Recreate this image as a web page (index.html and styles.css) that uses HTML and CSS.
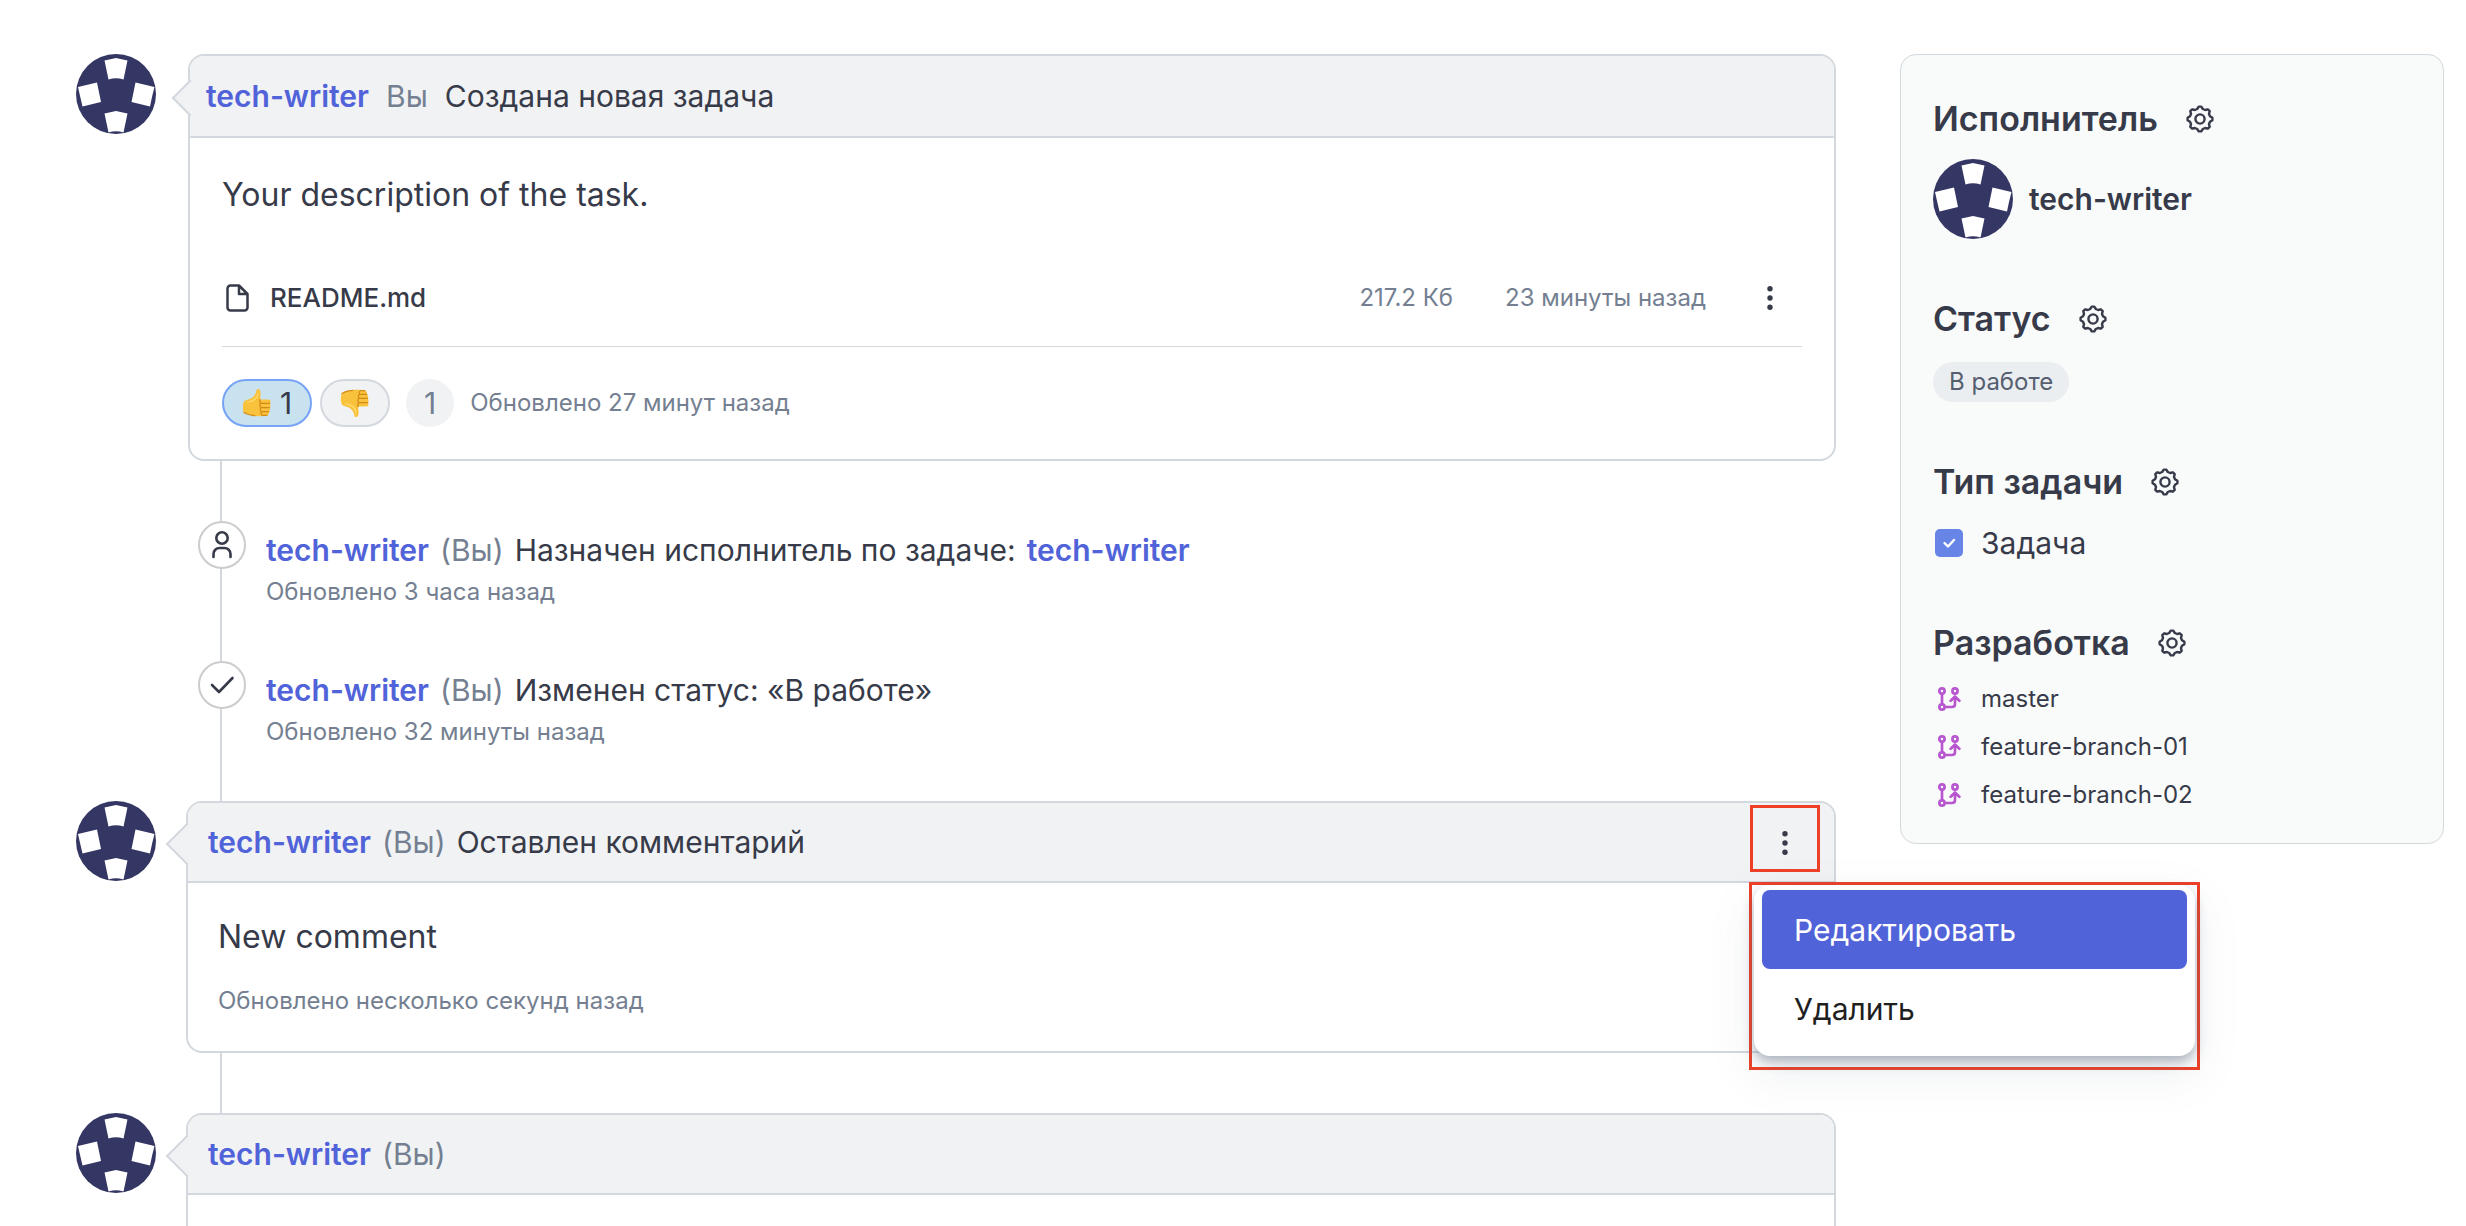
FILE: index.html
```html
<!DOCTYPE html>
<html lang="ru">
<head>
<meta charset="utf-8">
<title>Задача</title>
<meta name="viewport" content="width=device-width, initial-scale=1">
<link rel="stylesheet" href="styles.css">
</head>
<body>
<svg class="sprite" aria-hidden="true">
  <symbol id="avatar" viewBox="0 0 80 80">
    <circle cx="40" cy="40" r="40" fill="#343663"/>
    <g fill="#fff">
      <path d="M28.5 6.500 40 4 51.500 6.500 47.500 25.500Q40 23 32.500 25.500Z"/>
      <path d="M28.5 59.500 40 57 51.500 59.500 47.500 78.500Q40 76 32.500 78.500Z"/>
      <path d="M2 33 21 28.500 25 48 6.500 52.500Q4 42 2 33Z"/>
      <path d="M59.500 28.500 78.500 33Q76 42 74 52.500L55.500 48Z"/>
    </g>
  </symbol>
  <symbol id="gear" viewBox="0 0 28 28">
    <g fill="none" stroke="currentColor" stroke-width="2.400" stroke-linejoin="round">
      <circle cx="14" cy="14" r="4.600"/>
      <path d="M11.200 4 12.700 1.600 15.300 1.600 16.800 4 19.100 5 21.800 4.300 23.700 6.200 23 8.900 24 11.200 26.400 12.700 26.400 15.300 24 16.800 23 19.100 23.700 21.800 21.800 23.700 19.100 23 16.800 24 15.300 26.400 12.700 26.400 11.200 24 8.900 23 6.200 23.700 4.300 21.800 5 19.100 4 16.800 1.600 15.300 1.600 12.700 4 11.200 5 8.900 4.300 6.200 6.200 4.300 8.900 5Z"/>
    </g>
  </symbol>
  <symbol id="dots" viewBox="0 0 24 24">
    <g fill="currentColor"><circle cx="12" cy="2.700" r="2.700"/><circle cx="12" cy="12" r="2.700"/><circle cx="12" cy="21.300" r="2.700"/></g>
  </symbol>
  <symbol id="branch" viewBox="0 0 24 24">
    <g fill="none" stroke="currentColor" stroke-width="2.700" stroke-linecap="round" stroke-linejoin="round">
      <circle cx="5" cy="4" r="2.600"/><circle cx="18" cy="4" r="2.600"/><circle cx="5" cy="20" r="2.600"/>
      <path d="M5 7v10M8 20h7q3 0 3-3v-7M13.700 13.700l4.300-4.200 4.300 4.200"/>
    </g>
  </symbol>
  <symbol id="thumb" viewBox="0 0 32 32">
    <path fill="#f9c23c" d="M17.500 1c1.900.400 2.500 2.700 2.300 5.300-.100 2.200-.500 4.300-.300 6h8.800c2.300 0 2.900 3.200 1.200 4.200 1.500 1.100 1.300 3.600-.200 4.400 1.100 1.200.900 3.500-.700 4.300.800 1.300 0 3.700-2 4-3.800.900-9.500 1.300-13.600.400-4.200-1-8.400-1.600-11-3.300-1.500-3.100-1.400-9.300.300-12.300 2.400-1.600 6-1.500 8.500-3.500C13.500 8.400 15 5.500 15.300 2.700c.200-1.200 1-1.900 2.200-1.700z"/>
    <path fill="#ffdd70" d="M16.500 2.500c1 2.500-.500 7-4 9.500-2.500 1.800-5.500 2-8 3.300 3 .7 7-.5 10-3 2.800-2.400 4-7.300 2-9.800z"/>
    <path fill="none" stroke="#d48a16" stroke-width="1.300" stroke-linecap="round" d="M29.500 16.500h-9.300q-2.500 1.800 0 4.400h9.100M28.600 25.200h-8q-1.800-1.900-.4-4.300M26.600 29.200h-5q-2-1.700-1-4M19.500 12.300q-1.500 2 .700 4.200M2 26c3 2.500 8 2.800 12 3.600"/>
  </symbol>
</svg>

<div class="page">
  <main class="feed">
    <article class="entry entry-task">
      <svg class="avatar"><use href="#avatar"/></svg>
      <section class="card">
        <header class="card-head"><a class="user" href="#">tech-writer</a><span class="you">Вы</span><span>Создана новая задача</span></header>
        <div class="card-body task-body">
          <p class="text">Your description of the task.</p>
          <div class="file">
            <svg class="file-icon" viewBox="0 0 32 32"><path d="M17 3.500H8.500a3 3 0 0 0-3 3v19a3 3 0 0 0 3 3h14a3 3 0 0 0 3-3V12zM17 3.500V12h8.500" fill="none" stroke="currentColor" stroke-width="2.500" stroke-linejoin="round"/></svg>
            <a class="file-name" href="#">README.md</a>
            <span class="file-size">217.2 Кб</span>
            <span class="file-time">23 минуты назад</span>
            <button class="more" aria-label="Действия с файлом"><svg class="dots"><use href="#dots"/></svg></button>
          </div>
          <div class="reactions">
            <button class="reaction active" aria-label="Нравится, 1"><svg class="emoji"><use href="#thumb"/></svg>1</button>
            <button class="reaction" aria-label="Не нравится"><svg class="emoji down"><use href="#thumb"/></svg></button>
            <span class="count">1</span>
            <span class="meta">Обновлено 27 минут назад</span>
          </div>
        </div>
      </section>
    </article>

    <article class="event">
      <span class="event-icon"><svg viewBox="0 0 32 32"><g fill="none" stroke="currentColor" stroke-width="2.600" stroke-linecap="round"><circle cx="16" cy="9" r="5.700"/><path d="M7.500 28v-3a6 6 0 0 1 6-6h5a6 6 0 0 1 6 6v3"/></g></svg></span>
      <div class="event-text">
        <p class="line"><a class="user" href="#">tech-writer</a><span class="you">(Вы)</span><span>Назначен исполнитель по задаче:</span><a class="user" href="#">tech-writer</a></p>
        <p class="meta">Обновлено 3 часа назад</p>
      </div>
    </article>

    <article class="event">
      <span class="event-icon"><svg viewBox="0 0 32 32"><path d="M6 16l7 7L26.500 9" fill="none" stroke="currentColor" stroke-width="2.600" stroke-linecap="round" stroke-linejoin="round"/></svg></span>
      <div class="event-text">
        <p class="line"><a class="user" href="#">tech-writer</a><span class="you">(Вы)</span><span>Изменен статус: «В работе»</span></p>
        <p class="meta">Обновлено 32 минуты назад</p>
      </div>
    </article>

    <article class="entry entry-comment">
      <svg class="avatar"><use href="#avatar"/></svg>
      <section class="card">
        <header class="card-head"><a class="user" href="#">tech-writer</a><span class="you">(Вы)</span><span>Оставлен комментарий</span>
          <div class="actions">
            <button class="more marked" aria-label="Действия с комментарием"><svg class="dots"><use href="#dots"/></svg></button>
            <div class="menu-frame">
              <div class="menu" role="menu">
                <button class="menu-item selected" role="menuitem">Редактировать</button>
                <button class="menu-item" role="menuitem">Удалить</button>
              </div>
            </div>
          </div>
        </header>
        <div class="card-body comment-body">
          <p class="text">New comment</p>
          <p class="meta">Обновлено несколько секунд назад</p>
        </div>
      </section>
    </article>

    <article class="entry entry-comment entry-last">
      <svg class="avatar"><use href="#avatar"/></svg>
      <section class="card">
        <header class="card-head"><a class="user" href="#">tech-writer</a><span class="you">(Вы)</span></header>
      </section>
    </article>
  </main>

  <aside class="sidebar">
    <section class="panel">
      <h2>Исполнитель <button class="gear" aria-label="Изменить исполнителя"><svg><use href="#gear"/></svg></button></h2>
      <div class="assignee"><svg class="avatar"><use href="#avatar"/></svg><span>tech-writer</span></div>
    </section>
    <section class="panel">
      <h2>Статус <button class="gear" aria-label="Изменить статус"><svg><use href="#gear"/></svg></button></h2>
      <span class="badge">В работе</span>
    </section>
    <section class="panel">
      <h2>Тип задачи <button class="gear" aria-label="Изменить тип задачи"><svg><use href="#gear"/></svg></button></h2>
      <div class="type">
        <svg viewBox="0 0 28 28"><rect width="28" height="28" rx="5" fill="#6685e6"/><path d="M9.500 14l3.500 3.500 6-6.500" fill="none" stroke="#fff" stroke-width="2.400" stroke-linecap="round" stroke-linejoin="round"/></svg>
        <span>Задача</span>
      </div>
    </section>
    <section class="panel">
      <h2>Разработка <button class="gear" aria-label="Изменить ветки"><svg><use href="#gear"/></svg></button></h2>
      <ul class="branches">
        <li><svg><use href="#branch"/></svg><a href="#">master</a></li>
        <li><svg><use href="#branch"/></svg><a href="#">feature-branch-01</a></li>
        <li><svg><use href="#branch"/></svg><a href="#">feature-branch-02</a></li>
      </ul>
    </section>
  </aside>
</div>
</body>
</html>
```
FILE: styles.css
```css
:root {
  --ink: #373b49;
  --muted: #748091;
  --accent: #5163d9;
  --line: #d3d8df;
  --head: #f1f2f4;
  --mark: #ee4027;
}

* { box-sizing: border-box; }

body {
  margin: 0;
  background: #fff;
  color: var(--ink);
  font-family: Inter, "Liberation Sans", sans-serif;
  font-size: 30px;
  line-height: 40px;
}

p, h2, ul { margin: 0; padding: 0; }
a { color: inherit; text-decoration: none; }
svg { display: block; flex: none; }

button {
  padding: 0;
  border: 0;
  background: none;
  color: inherit;
  font: inherit;
  cursor: pointer;
}

.sprite { position: absolute; width: 0; height: 0; }

.page {
  display: flex;
  align-items: flex-start;
  gap: 64px;
  min-height: 100vh;
  padding: 54px 22px 0 76px;
}

/* Feed: the vertical thread runs behind the cards and icons */
.feed {
  display: flex;
  flex: 1;
  flex-direction: column;
  align-self: stretch;
  min-width: 0;
  background: linear-gradient(var(--line), var(--line)) 144px 0 / 2px 100% no-repeat;
}

.entry { display: flex; }
.entry-task { gap: 32px; margin-bottom: 60px; }
.entry-comment { gap: 30px; margin-bottom: 60px; }
.entry-last { flex: 1; margin-bottom: 0; }

.avatar { width: 80px; height: 80px; }

.card {
  flex: 1;
  min-width: 0;
  border: 2px solid var(--line);
  border-radius: 16px;
  background: #fff;
}

.entry-last .card { border-bottom: 0; border-radius: 16px 16px 0 0; }

.card-head {
  position: relative;
  display: flex;
  align-items: center;
  gap: 11px;
  height: 80px;
  padding: 0 14px 0 20px;
  border-bottom: 2px solid var(--line);
  border-radius: 14px 14px 0 0;
  background: var(--head);
}

.entry-task .card-head { gap: 17px; height: 82px; padding-left: 16px; }

.card-head::before {
  position: absolute;
  top: 26px;
  left: -16px;
  width: 28px;
  height: 28px;
  border: solid var(--line);
  border-width: 0 0 2px 2px;
  background: var(--head);
  content: "";
  transform: rotate(45deg);
}

.entry-task .card-head::before {
  top: 29px;
  left: -13px;
  width: 24px;
  height: 24px;
}

.user { color: var(--accent); font-weight: 600; }
.you { color: var(--muted); }
.text { font-size: 32px; }
.meta { color: var(--muted); font-size: 24px; line-height: 32px; }

.task-body { padding: 37px 32px 32px; }
.comment-body { padding: 34px 30px; }
.comment-body .meta { margin-top: 28px; }

.file {
  display: flex;
  align-items: center;
  height: 98px;
  margin-top: 34px;
  border-bottom: 1px solid var(--line);
  color: var(--muted);
  font-size: 24px;
}

.file-icon { width: 32px; height: 32px; color: var(--ink); }
.file-name { flex: 1; margin-left: 16px; color: var(--ink); font-size: 26px; font-weight: 500; }
.file-size { margin-right: 52px; }
.file-time { margin-right: 32px; }

.more {
  display: flex;
  align-items: center;
  justify-content: center;
  width: 64px;
  height: 64px;
  color: var(--ink);
}

.dots { width: 24px; height: 24px; }

.reactions { display: flex; align-items: center; gap: 8px; margin-top: 32px; }

.reaction {
  display: flex;
  align-items: center;
  gap: 8px;
  height: 48px;
  padding: 0 18px;
  border: 2px solid var(--line);
  border-radius: 24px;
  background: var(--head);
}

.reaction.active { border-color: #76a3f5; background: #c8e2ef; }
.emoji { width: 30px; height: 32px; }
.emoji.down { transform: scaleY(-1); }

.count {
  width: 48px;
  margin: 0 8px;
  border-radius: 24px;
  background: var(--head);
  color: var(--muted);
  line-height: 48px;
  text-align: center;
}

.event { display: flex; gap: 20px; margin-left: 122px; height: 140px; }

.event-icon {
  display: grid;
  place-items: center;
  flex: none;
  width: 48px;
  height: 48px;
  border: 2px solid #ccc;
  border-radius: 50%;
  background: #fff;
}

.event-icon svg { width: 32px; height: 32px; }
.event-text { padding-top: 9px; }
.event-text .meta { margin-top: 6px; }
.line { display: flex; gap: 11px; }

/* Actions menu of the comment */
.actions { position: relative; align-self: flex-start; margin: 2px 0 0 auto; }

.marked {
  width: 70px;
  height: 67px;
  padding-top: 8px;
  border: 3px solid var(--mark);
}

.menu-frame {
  position: absolute;
  z-index: 2;
  top: 77px;
  left: -1px;
  width: 451px;
  padding: 0 2px 11px;
  border: 3px solid var(--mark);
}

.menu {
  padding: 5px 8px 8px;
  border-radius: 16px;
  background: #fff;
  box-shadow: 0 6px 12px rgba(90, 105, 125, .45), 0 16px 48px rgba(90, 105, 125, .12);
}

.menu-item {
  display: block;
  width: 100%;
  height: 79px;
  padding: 0 32px;
  border-radius: 8px;
  color: #1f1f1f;
  text-align: left;
}

.menu-item.selected { background: var(--accent); color: #fff; }

/* Sidebar */
.sidebar {
  display: flex;
  flex: none;
  flex-direction: column;
  gap: 56px;
  width: 544px;
  padding: 40px 32px 24px;
  border: 1px solid var(--line);
  border-radius: 16px;
  background: #f9fafa;
}

.panel h2 {
  display: flex;
  align-items: center;
  gap: 28px;
  font-size: 34px;
  font-weight: 600;
  line-height: 48px;
}

.gear svg { width: 28px; height: 28px; }
.assignee { display: flex; align-items: center; gap: 16px; margin-top: 16px; font-weight: 600; }

.badge {
  display: inline-block;
  margin-top: 19px;
  padding: 0 16px;
  border-radius: 20px;
  background: #ebeef1;
  color: #555f70;
  font-size: 24px;
}

.type { display: flex; align-items: center; gap: 18px; margin: 17px 0 0 2px; }
.type svg { width: 28px; height: 28px; }

.branches { margin-top: 8px; list-style: none; font-size: 24px; line-height: 48px; }
.branches li { display: flex; align-items: center; gap: 20px; padding-left: 4px; }
.branches svg { width: 24px; height: 24px; color: #b856cf; }
```
